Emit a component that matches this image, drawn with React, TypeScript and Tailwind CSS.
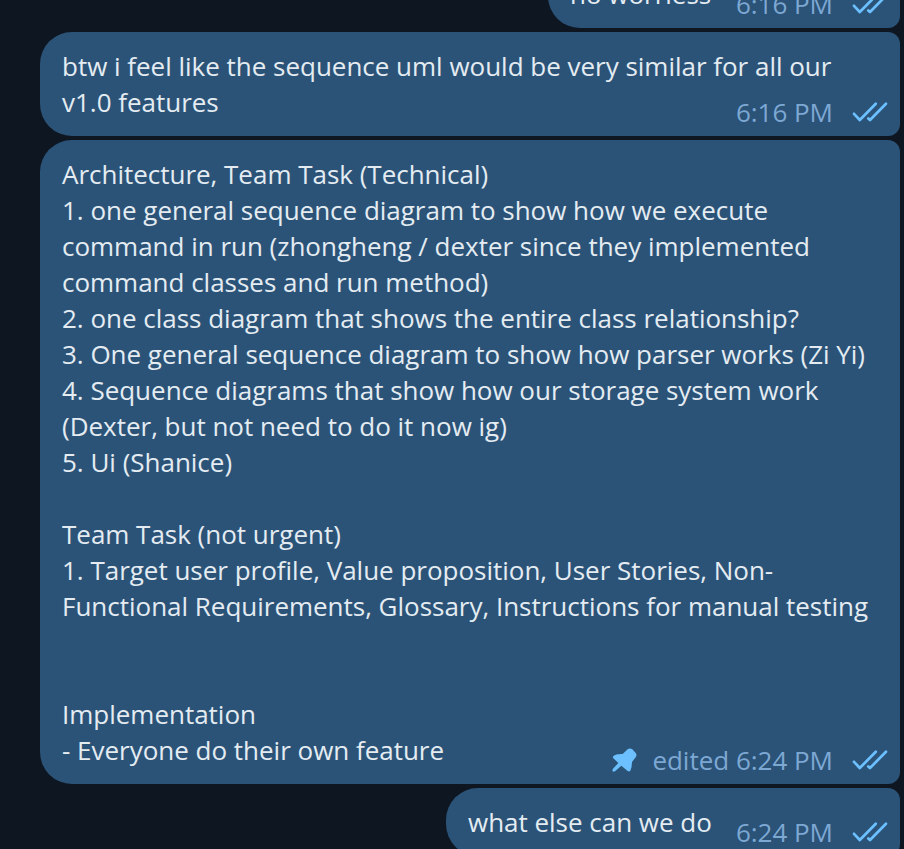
import type { ReactNode } from 'react';

function Ticks() {
  return (
    <svg
      className="ml-[18px] block h-6 w-[38px] shrink-0"
      viewBox="0 0 38 24"
      fill="none"
      stroke="#6cc0ff"
      strokeWidth="2.7"
      strokeLinecap="round"
      strokeLinejoin="round"
    >
      <path d="M3 13.8 L8.8 20 L24.8 3.8" />
      <path d="M17.3 18.4 L19 20 L35 3.8" />
    </svg>
  );
}

function Pin() {
  return (
    <svg className="mr-[15px] block h-[26px] w-[26px] shrink-0" viewBox="0 0 78 78" fill="#6cc0ff">
      <path d="M7 28 Q14 20 35 21 L50 7 Q56 2 64 7 L74 18 Q79 24 74 31 L63 45 Q63 60 58 71 Q55 75 50 72 L31 56 L13 72 Q8 76 5 73 Q3 70 6 65 L22 48 L7 34 Q4 31 7 28 Z" />
    </svg>
  );
}

type BubbleProps = {
  width: string;
  time: string;
  pinned?: boolean;
  children: ReactNode;
};

function Bubble({ width, time, pinned, children }: BubbleProps) {
  return (
    <div
      className={`relative shrink-0 rounded-l-[32px] rounded-r-[12px] bg-[#2b5378] py-4 pl-[22px] text-[26px] leading-9 tracking-[-0.015px] whitespace-pre text-[#e4ecf2] ${width}`}
    >
      {children}
      <div className="absolute right-[11px] bottom-[6px] flex items-center text-[#7da8d3]">
        {pinned && <Pin />}
        <span>{time}</span>
        <Ticks />
      </div>
    </div>
  );
}

const tasks = [
  'Architecture, Team Task (Technical)',
  '1. one general sequence diagram to show how we execute',
  'command in run (zhongheng / dexter since they implemented',
  'command classes and run method)',
  '2. one class diagram that shows the entire class relationship?',
  '3. One general sequence diagram to show how parser works (Zi Yi)',
  '4. Sequence diagrams that show how our storage system work',
  '(Dexter, but not need to do it now ig)',
  '5. Ui (Shanice)',
  '',
  'Team Task (not urgent)',
  '1. Target user profile, Value proposition, User Stories, Non-',
  'Functional Requirements, Glossary, Instructions for manual testing',
  '',
  '',
  'Implementation',
  '- Everyone do their own feature',
];

export default function App() {
  return (
    <main className="h-[849px] w-[904px] overflow-hidden bg-[#0e1621] font-['Open_Sans','Noto_Sans',sans-serif]">
      <div className="-mt-10 flex flex-col items-end gap-1 pr-1">
        <Bubble width="w-[352px]" time="6:16 PM">
          <p>no worriess</p>
        </Bubble>
        <Bubble width="w-[860px]" time="6:16 PM">
          <p>btw i feel like the sequence uml would be very similar for all our</p>
          <p>v1.0 features</p>
        </Bubble>
        <Bubble width="w-[860px]" time="edited 6:24 PM" pinned>
          {tasks.map((line, i) => (
            <p key={i} className="h-9">
              {line}
            </p>
          ))}
        </Bubble>
        <Bubble width="w-[454px]" time="6:24 PM">
          <p>what else can we do</p>
        </Bubble>
      </div>
    </main>
  );
}
